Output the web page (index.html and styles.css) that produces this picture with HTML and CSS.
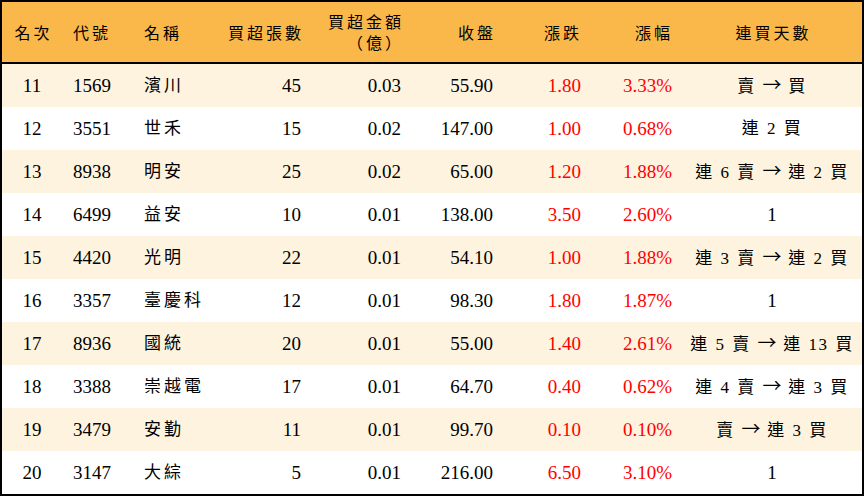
FILE: index.html
```html
<!DOCTYPE html>
<html lang="zh-Hant">
<head>
<meta charset="utf-8">
<title>買超排行</title>
<link rel="stylesheet" href="styles.css">
</head>
<body>
<table class="rank">
  <colgroup>
    <col class="c1"><col class="c2"><col class="c3"><col class="c4"><col class="c5">
    <col class="c6"><col class="c7"><col class="c8"><col class="c9">
  </colgroup>
  <thead>
    <tr>
      <th class="ctr">名次</th>
      <th class="lft">代號</th>
      <th class="lft">名稱</th>
      <th class="rgt">買超張數</th>
      <th class="rgt two"><span class="ln">買超金額</span><span class="ln">（億）</span></th>
      <th class="rgt">收盤</th>
      <th class="rgt">漲跌</th>
      <th class="rgt">漲幅</th>
      <th class="ctr">連買天數</th>
    </tr>
  </thead>
  <tbody>
    <tr class="alt"><td class="ctr">11</td><td class="lft">1569</td><td class="lft cjk">濱川</td><td class="rgt">45</td><td class="rgt">0.03</td><td class="rgt">55.90</td><td class="rgt up">1.80</td><td class="rgt up">3.33%</td><td class="ctr cjk">賣 <span class="arr">→</span> 買</td></tr>
    <tr><td class="ctr">12</td><td class="lft">3551</td><td class="lft cjk">世禾</td><td class="rgt">15</td><td class="rgt">0.02</td><td class="rgt">147.00</td><td class="rgt up">1.00</td><td class="rgt up">0.68%</td><td class="ctr cjk">連 2 買</td></tr>
    <tr class="alt"><td class="ctr">13</td><td class="lft">8938</td><td class="lft cjk">明安</td><td class="rgt">25</td><td class="rgt">0.02</td><td class="rgt">65.00</td><td class="rgt up">1.20</td><td class="rgt up">1.88%</td><td class="ctr cjk">連 6 賣 <span class="arr">→</span> 連 2 買</td></tr>
    <tr><td class="ctr">14</td><td class="lft">6499</td><td class="lft cjk">益安</td><td class="rgt">10</td><td class="rgt">0.01</td><td class="rgt">138.00</td><td class="rgt up">3.50</td><td class="rgt up">2.60%</td><td class="ctr">1</td></tr>
    <tr class="alt"><td class="ctr">15</td><td class="lft">4420</td><td class="lft cjk">光明</td><td class="rgt">22</td><td class="rgt">0.01</td><td class="rgt">54.10</td><td class="rgt up">1.00</td><td class="rgt up">1.88%</td><td class="ctr cjk">連 3 賣 <span class="arr">→</span> 連 2 買</td></tr>
    <tr><td class="ctr">16</td><td class="lft">3357</td><td class="lft cjk">臺慶科</td><td class="rgt">12</td><td class="rgt">0.01</td><td class="rgt">98.30</td><td class="rgt up">1.80</td><td class="rgt up">1.87%</td><td class="ctr">1</td></tr>
    <tr class="alt"><td class="ctr">17</td><td class="lft">8936</td><td class="lft cjk">國統</td><td class="rgt">20</td><td class="rgt">0.01</td><td class="rgt">55.00</td><td class="rgt up">1.40</td><td class="rgt up">2.61%</td><td class="ctr cjk">連 5 賣 <span class="arr">→</span> 連 13 買</td></tr>
    <tr><td class="ctr">18</td><td class="lft">3388</td><td class="lft cjk">崇越電</td><td class="rgt">17</td><td class="rgt">0.01</td><td class="rgt">64.70</td><td class="rgt up">0.40</td><td class="rgt up">0.62%</td><td class="ctr cjk">連 4 賣 <span class="arr">→</span> 連 3 買</td></tr>
    <tr class="alt"><td class="ctr">19</td><td class="lft">3479</td><td class="lft cjk">安勤</td><td class="rgt">11</td><td class="rgt">0.01</td><td class="rgt">99.70</td><td class="rgt up">0.10</td><td class="rgt up">0.10%</td><td class="ctr cjk">賣 <span class="arr">→</span> 連 3 買</td></tr>
    <tr><td class="ctr">20</td><td class="lft">3147</td><td class="lft cjk">大綜</td><td class="rgt">5</td><td class="rgt">0.01</td><td class="rgt">216.00</td><td class="rgt up">6.50</td><td class="rgt up">3.10%</td><td class="ctr">1</td></tr>
  </tbody>
</table>
</body>
</html>
```
FILE: styles.css
```css
html, body {
  margin: 0;
  padding: 0;
  background: #ffffff;
}
.rank {
  width: 864px;
  table-layout: fixed;
  border-collapse: separate;
  border-spacing: 0;
  border: 2px solid #000;
  font-family: "Liberation Serif", "Noto Sans CJK TC", serif;
  font-size: 19px;
  color: #000;
}
.c1 { width: 60px; }
.c2 { width: 68px; }
.c3 { width: 80px; }
.c4 { width: 101px; }
.c5 { width: 100px; }
.c6 { width: 92px; }
.c7 { width: 88px; }
.c8 { width: 91px; }
.c9 { width: 180px; }
.rank th {
  height: 60px;
  padding: 0;
  background: #fab84b;
  border-bottom: 2px solid #000;
  font-family: "Noto Sans CJK TC", sans-serif;
  font-weight: normal;
  font-size: 16px;
  letter-spacing: 3px;
  line-height: 20px;
  vertical-align: middle;
}
.rank th.two .ln {
  display: block;
  height: 21px;
  line-height: 21px;
}
.rank td {
  height: 43px;
  padding: 0;
  vertical-align: middle;
  line-height: 20px;
  white-space: nowrap;
}
.rank tr.alt td {
  background: #fef3df;
}
.ctr { text-align: center; }
.lft { text-align: left; }
.rgt { text-align: right; }
.rank th.lft, .rank td.lft { padding-left: 11px; }
.rank th:nth-child(3), .rank td:nth-child(3) { padding-left: 14px; }
.rank td.rgt { padding-right: 10px; }
.rank th.rgt { padding-right: 7px; }
.rank th:nth-child(7), .rank th:nth-child(8) { padding-right: 9px; }
.rank th.ctr { padding-left: 3px; }
.cjk {
  font-family: "Liberation Serif", "Noto Sans CJK TC", serif;
}
.rank td.cjk.lft { font-size: 17px; letter-spacing: 3px; }
.rank td.cjk.ctr { font-size: 17px; letter-spacing: 1.5px; word-spacing: 1px; }
.arr {
  font-family: "Noto Sans CJK TC", sans-serif;
  font-size: 19px;
  letter-spacing: 0;
}
.up { color: #ff0000; }
```
